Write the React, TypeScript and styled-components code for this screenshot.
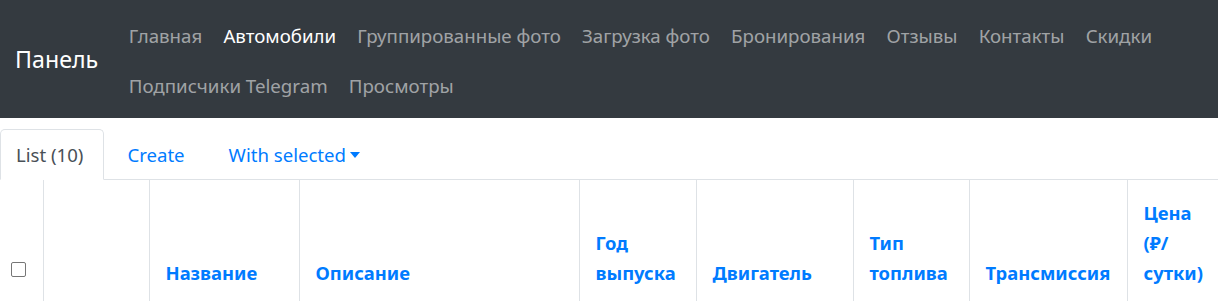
import React from "react";
import styled, { createGlobalStyle } from "styled-components";

const GlobalStyle = createGlobalStyle`
  html, body {
    margin: 0;
    padding: 0;
    background: #fff;
    overflow: hidden;
  }
  body {
    font-family: "Noto Sans", "Open Sans", sans-serif;
    font-size: 18px;
    color: #212529;
  }
`;

const Navbar = styled.nav`
  height: 118px;
  box-sizing: border-box;
  background-color: #343a40;
  display: flex;
  align-items: center;
  padding: 0 15px;
`;

const Brand = styled.a`
  font-size: 23.2px;
  color: #fff;
  margin-right: 20px;
  white-space: nowrap;
`;

const NavList = styled.ul`
  list-style: none;
  margin: 0;
  padding: 10px 0 0;
  display: flex;
  flex-wrap: wrap;
  align-self: flex-start;
  width: 1100px;
`;

const NavLink = styled.li<{ $active?: boolean }>`
  height: 50px;
  display: flex;
  align-items: center;
  padding: 0 10.6px;
  font-size: 18.7px;
  color: ${(p) => (p.$active ? "#fff" : "rgba(255, 255, 255, 0.55)")};
  white-space: nowrap;
`;

const Tabs = styled.ul`
  list-style: none;
  margin: 0;
  padding: 11px 0 0;
  display: flex;
  gap: 7px;
  border-bottom: 1px solid #dee2e6;
`;

const Tab = styled.li<{ $active?: boolean }>`
  height: 51px;
  box-sizing: border-box;
  display: flex;
  align-items: center;
  padding: 0 20px 0 15px;
  margin-bottom: -1px;
  border: 1px solid ${(p) => (p.$active ? "#dee2e6" : "transparent")};
  border-bottom-color: ${(p) => (p.$active ? "#fff" : "transparent")};
  border-radius: 5px 5px 0 0;
  background: ${(p) => (p.$active ? "#fff" : "transparent")};
  color: ${(p) => (p.$active ? "#495057" : "#007bff")};
  font-size: 18.6px;
  white-space: nowrap;
`;

const Caret = styled.span`
  display: inline-block;
  margin-left: 4px;
  border-top: 6px solid #007bff;
  border-left: 5px solid transparent;
  border-right: 5px solid transparent;
  vertical-align: 3px;
`;

const Table = styled.table`
  border-collapse: collapse;
  table-layout: fixed;
  width: 1227px;
`;

const Th = styled.th<{ $w: number }>`
  width: ${(p) => p.$w}px;
  box-sizing: border-box;
  height: 122px;
  padding: 12px 8px 14px 16px;
  vertical-align: bottom;
  text-align: left;
  border-left: 1px solid #dee2e6;
  line-height: 30px;
  font-size: 18.4px;
  font-weight: 700;
  color: #007bff;
  &:first-child {
    border-left: none;
    padding: 0 0 25px 11px;
  }
`;

const Check = styled.span`
  display: block;
  width: 13px;
  height: 13px;
  border: 1px solid #767676;
  border-radius: 2px;
  background: #fff;
`;

const links = [
  "Главная",
  "Автомобили",
  "Группированные фото",
  "Загрузка фото",
  "Бронирования",
  "Отзывы",
  "Контакты",
  "Скидки",
  "Подписчики Telegram",
  "Просмотры",
];

const columns: { title: React.ReactNode; w: number }[] = [
  { title: "", w: 106 },
  { title: "Название", w: 150 },
  { title: "Описание", w: 280 },
  { title: <>Год<br />выпуска</>, w: 117 },
  { title: "Двигатель", w: 157 },
  { title: <>Тип<br />топлива</>, w: 116 },
  { title: "Трансмиссия", w: 158 },
  { title: <>Цена<br />(₽/<br />сутки)</>, w: 100 },
];

export default function App() {
  return (
    <>
      <GlobalStyle />
      <Navbar>
        <Brand>Панель</Brand>
        <NavList>
          {links.map((l) => (
            <NavLink key={l} $active={l === "Автомобили"}>
              {l}
            </NavLink>
          ))}
        </NavList>
      </Navbar>
      <Tabs>
        <Tab $active>List (10)</Tab>
        <Tab>Create</Tab>
        <Tab>
          With selected
          <Caret />
        </Tab>
      </Tabs>
      <Table>
        <thead>
          <tr>
            <Th $w={43}>
              <Check />
            </Th>
            {columns.map((c, i) => (
              <Th key={i} $w={c.w}>
                {c.title}
              </Th>
            ))}
          </tr>
        </thead>
      </Table>
    </>
  );
}
